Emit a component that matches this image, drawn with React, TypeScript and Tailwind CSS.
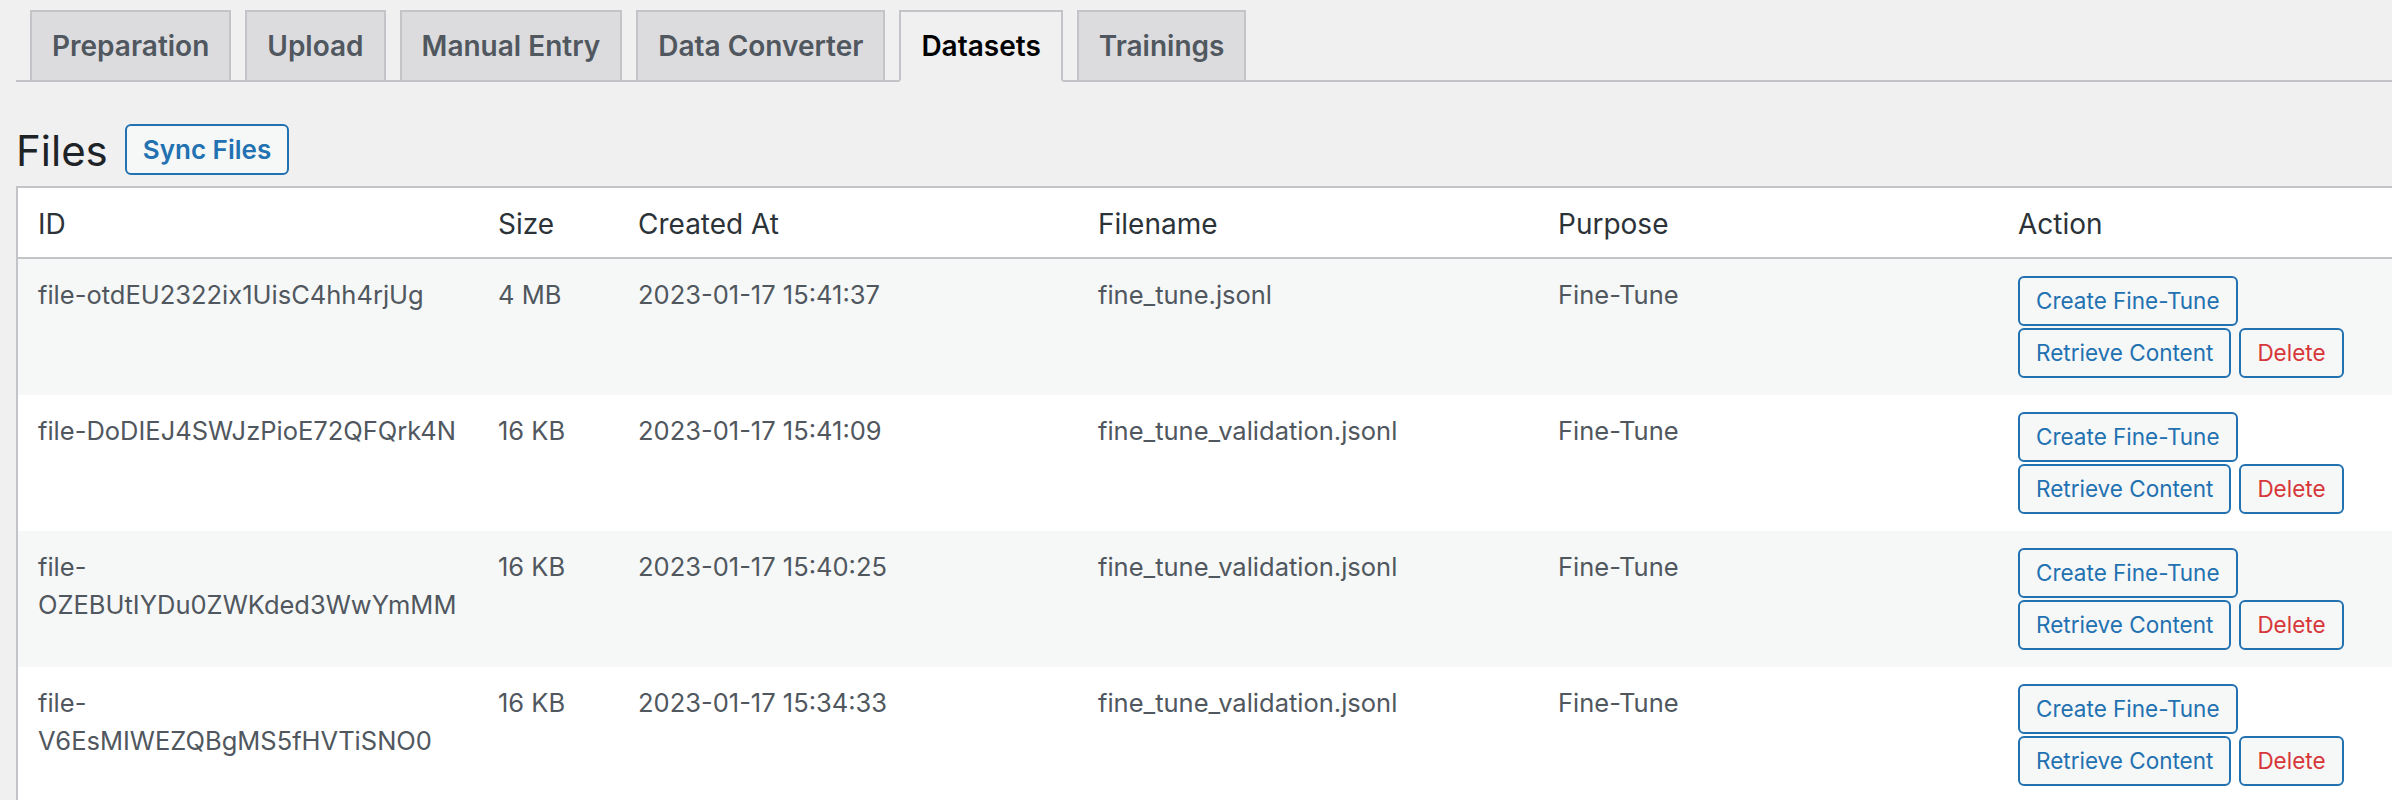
import React from 'react';

const tabs = ['Preparation', 'Upload', 'Manual Entry', 'Data Converter', 'Datasets', 'Trainings'];

interface FileRow {
  id: string[];
  size: string;
  created: string;
  filename: string;
  purpose: string;
}

// long ids break after "file-" like the original table does
const files: FileRow[] = [
  { id: ['file-otdEU2322ix1UisC4hh4rjUg'], size: '4 MB', created: '2023-01-17 15:41:37', filename: 'fine_tune.jsonl', purpose: 'Fine-Tune' },
  { id: ['file-DoDIEJ4SWJzPioE72QFQrk4N'], size: '16 KB', created: '2023-01-17 15:41:09', filename: 'fine_tune_validation.jsonl', purpose: 'Fine-Tune' },
  { id: ['file-', 'OZEBUtIYDu0ZWKded3WwYmMM'], size: '16 KB', created: '2023-01-17 15:40:25', filename: 'fine_tune_validation.jsonl', purpose: 'Fine-Tune' },
  { id: ['file-', 'V6EsMIWEZQBgMS5fHVTiSNO0'], size: '16 KB', created: '2023-01-17 15:34:33', filename: 'fine_tune_validation.jsonl', purpose: 'Fine-Tune' },
];

const columns = [
  { label: 'ID', width: 'w-[460px]' },
  { label: 'Size', width: 'w-[140px]' },
  { label: 'Created At', width: 'w-[460px]' },
  { label: 'Filename', width: 'w-[460px]' },
  { label: 'Purpose', width: 'w-[460px]' },
  { label: 'Action', width: 'w-[460px]' },
];

const cell = 'px-[20px] pt-[17px] pb-[16px] align-top text-[25.5px] leading-[38px] text-[#50575e] whitespace-nowrap';

function SmallButton({ children, danger }: { children: React.ReactNode; danger?: boolean }) {
  return (
    <button
      className={`h-[50px] rounded-[6px] border-2 border-[#2271b1] bg-[#f6f7f7] px-[16px] text-[22.5px] leading-[46px] whitespace-nowrap ${
        danger ? 'text-[#d63638]' : 'text-[#2271b1]'
      }`}
    >
      {children}
    </button>
  );
}

export default function App() {
  return (
    <div className="min-h-screen w-full overflow-hidden bg-[#f0f0f1] pl-4 font-['Inter',sans-serif]">
      {/* Tabs */}
      <nav className="flex items-end border-b-2 border-[#c3c4c7] pt-[10px]">
        {tabs.map((tab) => {
          const active = tab === 'Datasets';
          return (
            <a
              key={tab}
              className={`-mb-[2px] ml-[14px] border-2 px-[20px] py-[10px] text-[28px] font-semibold leading-[48px] whitespace-nowrap ${
                active
                  ? 'border-[#c3c4c7] border-b-[#f0f0f1] bg-[#f0f0f1] text-black'
                  : 'border-[#c3c4c7] bg-[#dcdcde] text-[#50575e]'
              }`}
            >
              {tab}
            </a>
          );
        })}
      </nav>

      {/* Heading */}
      <div className="mt-[42px] mb-[11px] flex items-start">
        <h2 className="mt-[2px] text-[42px] leading-[49px] font-normal text-[#1d2327]">Files</h2>
        <button className="ml-[17px] h-[51px] rounded-[6px] border-2 border-[#2271b1] bg-[#f6f7f7] px-[16px] text-[26px] font-semibold leading-[47px] text-[#2271b1]">
          Sync Files
        </button>
      </div>

      {/* Table */}
      <div className="w-[2444px] border-2 border-[#c3c4c7] bg-white">
        <table className="w-full table-fixed border-collapse">
          <thead>
            <tr className="border-b-2 border-[#c3c4c7] bg-white">
              {columns.map((c) => (
                <th
                  key={c.label}
                  className={`${c.width} px-[20px] pt-[18px] pb-[14px] text-left text-[28px] leading-[37px] font-normal text-[#2c3338]`}
                >
                  {c.label}
                </th>
              ))}
            </tr>
          </thead>
          <tbody>
            {files.map((f, i) => (
              <tr key={i} className={i % 2 === 0 ? 'bg-[#f6f7f7]' : 'bg-white'}>
                <td className={cell}>
                  {f.id.map((line) => (
                    <div key={line}>{line}</div>
                  ))}
                </td>
                <td className={cell}>{f.size}</td>
                <td className={cell}>{f.created}</td>
                <td className={cell}>{f.filename}</td>
                <td className={cell}>{f.purpose}</td>
                <td className="px-[20px] pt-[17px] pb-[17px] align-top">
                  <div className="flex flex-col items-start gap-[2px]">
                    <SmallButton>Create Fine-Tune</SmallButton>
                    <div className="flex gap-[8px]">
                      <SmallButton>Retrieve Content</SmallButton>
                      <SmallButton danger>Delete</SmallButton>
                    </div>
                  </div>
                </td>
              </tr>
            ))}
          </tbody>
        </table>
      </div>
    </div>
  );
}
